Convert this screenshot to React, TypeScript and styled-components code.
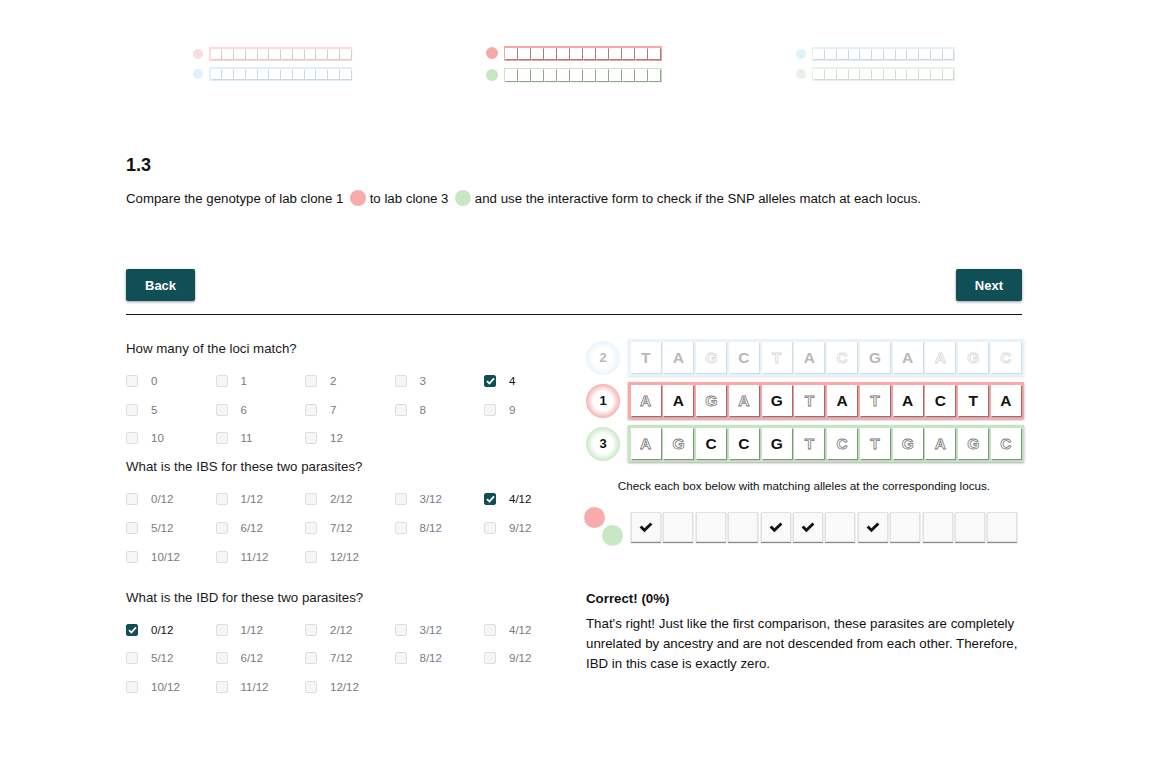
import React from 'react';
import styled, { createGlobalStyle } from 'styled-components';

const GlobalStyle = createGlobalStyle`
  html, body { margin: 0; padding: 0; background: #fff; }
  body { font-family: "Liberation Sans", Arial, Helvetica, sans-serif; color: #111; }
`;

const COLORS = { red: '#f7a8a8', green: '#c5e6c0', blue: '#b1def7' };
type ColorKey = keyof typeof COLORS;

const Page = styled.div`
  width: 896px;
  padding: 46px 0 40px 126px;
`;

/* ---------- overview strips ---------- */
const Overview = styled.div`
  display: flex;
  justify-content: space-around;
  align-items: center;
`;

const StripGroup = styled.div<{ $faded?: boolean; $gap: number }>`
  display: flex;
  flex-direction: column;
  gap: ${p => p.$gap}px;
  opacity: ${p => (p.$faded ? 0.4 : 1)};
`;

const StripRow = styled.div<{ $gap: number }>`
  display: flex;
  align-items: center;
  gap: ${p => p.$gap}px;
`;

const StripDot = styled.span<{ $color: string; $size: number }>`
  flex: none;
  width: ${p => p.$size}px;
  height: ${p => p.$size}px;
  border-radius: 50%;
  background: ${p => p.$color};
`;

const StripFrame = styled.div<{ $color: string }>`
  display: flex;
  gap: 1px;
  padding: 0.5px;
  border: 1px solid ${p => p.$color};
  background: ${p => p.$color};
`;

const StripCell = styled.span<{ $w: number; $h: number }>`
  width: ${p => p.$w}px;
  height: ${p => p.$h}px;
  background: #fff;
  box-shadow: 1px 1px 1px rgba(0, 0, 0, 0.28);
`;

/* ---------- header ---------- */
const Title = styled.h2`
  margin: 72px 0 0;
  font-size: 18px;
  line-height: 22px;
  font-weight: bold;
`;

const Intro = styled.p`
  margin: 13px 0 0;
  font-size: 13.25px;
  line-height: 20px;
`;

const InlineDot = styled.span<{ $color: string }>`
  display: inline-block;
  width: 16px;
  height: 16px;
  margin-left: 3px;
  border-radius: 50%;
  background: ${p => p.$color};
  vertical-align: -3px;
`;

const Nav = styled.div`
  display: flex;
  justify-content: space-between;
  margin-top: 60px;
`;

const NavButton = styled.button`
  height: 32px;
  padding: 0 19px;
  border: none;
  border-radius: 2px;
  background: #0f4f55;
  color: #fff;
  font-family: "Liberation Sans", Arial, sans-serif;
  font-weight: bold;
  font-size: 13px;
  box-shadow: 0 1px 3px rgba(0, 0, 0, 0.4);
  cursor: pointer;
`;

const Rule = styled.hr`
  margin: 13px 0 0;
  border: 0;
  border-top: 1px solid #111;
`;

const Body = styled.div`
  display: grid;
  grid-template-columns: 460px 436px;
  margin-top: 24px;
`;

/* ---------- questions ---------- */
const Questions = styled.div``;

const Question = styled.div<{ $gap: number }>`
  margin-top: ${p => p.$gap}px;
`;

const QTitle = styled.div`
  font-size: 13.3px;
  line-height: 20px;
  color: #1a1a1a;
`;

const OptionGrid = styled.div`
  display: grid;
  grid-template-columns: repeat(5, 89.5px);
  row-gap: 16.7px;
  margin-top: 16px;
`;

const Option = styled.label<{ $checked?: boolean }>`
  display: flex;
  align-items: center;
  gap: 13px;
  height: 12px;
  font-size: 11.5px;
  color: ${p => (p.$checked ? '#111' : '#777b84')};
`;

const Box = styled.span<{ $checked?: boolean }>`
  flex: none;
  box-sizing: border-box;
  width: 12px;
  height: 12px;
  border-radius: 2px;
  border: 1px solid ${p => (p.$checked ? '#0f4f55' : '#dedede')};
  background: ${p => (p.$checked ? '#0f4f55' : '#f6f6f6')};
  display: flex;
  align-items: center;
  justify-content: center;
`;

/* ---------- sequences ---------- */
const Panel = styled.div``;

const Sequences = styled.div`
  display: flex;
  flex-direction: column;
  gap: 6px;
`;

const SeqRow = styled.div<{ $faded?: boolean }>`
  display: flex;
  align-items: center;
  gap: 7.7px;
  opacity: ${p => (p.$faded ? 0.3 : 1)};
`;

const Badge = styled.div<{ $color: string }>`
  flex: none;
  width: 34px;
  height: 34px;
  border-radius: 50%;
  background: radial-gradient(circle, #fff 40%, ${p => p.$color} 74%);
  display: flex;
  align-items: center;
  justify-content: center;
  font-weight: bold;
  font-size: 13px;
  color: #111;
`;

const SeqFrame = styled.div<{ $color: string }>`
  display: flex;
  gap: 2.75px;
  padding: 1px;
  border: 2px solid ${p => p.$color};
  background: ${p => p.$color};
  box-shadow: 0 1px 2px rgba(0, 0, 0, 0.35);
`;

const SeqCell = styled.div<{ $outline?: boolean }>`
  width: 30px;
  height: 31px;
  background: #fff;
  box-shadow: 1px 1px 1px rgba(0, 0, 0, 0.35);
  display: flex;
  align-items: center;
  justify-content: center;
  font-weight: bold;
  font-size: 15.5px;
  color: ${p => (p.$outline ? '#fff' : '#111')};
  -webkit-text-stroke: ${p => (p.$outline ? '0.8px #7a7a7a' : '0')};
`;

const Instruction = styled.div`
  margin-top: 16px;
  text-align: center;
  font-size: 11.7px;
  line-height: 16px;
  color: #111;
`;

const CheckRow = styled.div`
  display: flex;
  align-items: center;
  gap: 7px;
  margin: 13px 0 0 -2px;
`;

const DotCluster = styled.div`
  position: relative;
  flex: none;
  width: 40px;
  height: 40px;
`;

const ClusterDot = styled.span<{ $color: string; $x: number; $y: number }>`
  position: absolute;
  left: ${p => p.$x}px;
  top: ${p => p.$y}px;
  width: 21px;
  height: 21px;
  border-radius: 50%;
  background: ${p => p.$color};
`;

const CheckCells = styled.div`
  display: flex;
  gap: 2.4px;
`;

const CheckCell = styled.div`
  box-sizing: border-box;
  width: 30px;
  height: 30px;
  background: #f9f9f9;
  border: 1px solid #e2e2e2;
  box-shadow: 0 1px 1px rgba(0, 0, 0, 0.45);
  display: flex;
  align-items: center;
  justify-content: center;
`;

const Feedback = styled.div`
  margin-top: 42px;
  font-size: 13.3px;
  line-height: 20px;
`;

const FeedbackTitle = styled.div`
  font-weight: bold;
  margin-bottom: 5px;
`;

/* ---------- data ---------- */
const strip12 = Array.from({ length: 12 });

const groups: { faded: boolean; big: boolean; rows: ColorKey[] }[] = [
  { faded: true, big: false, rows: ['red', 'blue'] },
  { faded: false, big: true, rows: ['red', 'green'] },
  { faded: true, big: false, rows: ['blue', 'green'] },
];

// letters: uppercase solid, lowercase outlined
const seqRows: { id: string; color: ColorKey; faded?: boolean; seq: string }[] = [
  { id: '2', color: 'blue', faded: true, seq: 'TAgCtAcGAagc' },
  { id: '1', color: 'red', seq: 'aAgaGtAtACTA' },
  { id: '3', color: 'green', seq: 'agCCGtctgagc' },
];

const checks = [true, false, false, false, true, true, false, true, false, false, false, false];

const questions = [
  { title: 'How many of the loci match?', gap: 0, suffix: '', checked: 4 },
  { title: 'What is the IBS for these two parasites?', gap: 13, suffix: '/12', checked: 4 },
  { title: 'What is the IBD for these two parasites?', gap: 25, suffix: '/12', checked: 0 },
];

const SmallCheck = () => (
  <svg width="9" height="8" viewBox="0 0 9 8">
    <polyline points="1,4.2 3.4,6.5 8,1.3" fill="none" stroke="#fff" strokeWidth="1.8" />
  </svg>
);

const HeavyCheck = () => (
  <svg width="14" height="11" viewBox="0 0 14 11">
    <path d="M0.6 5.6 L2.6 3.6 L5.4 6.2 L11.4 0.4 L13.4 2.4 L5.4 10.2 Z" fill="#111" />
  </svg>
);

export default function App() {
  return (
    <>
      <GlobalStyle />
      <Page>
        <Overview>
          {groups.map((g, gi) => (
            <StripGroup key={gi} $faded={g.faded} $gap={g.big ? 7 : 6.7}>
              {g.rows.map(c => (
                <StripRow key={c} $gap={g.big ? 5.5 : 6}>
                  <StripDot $color={COLORS[c]} $size={g.big ? 12 : 10} />
                  <StripFrame $color={COLORS[c]}>
                    {strip12.map((_, i) => (
                      <StripCell key={i} $w={g.big ? 12 : 10.75} $h={g.big ? 11.5 : 10.5} />
                    ))}
                  </StripFrame>
                </StripRow>
              ))}
            </StripGroup>
          ))}
        </Overview>

        <Title>1.3</Title>
        <Intro>
          Compare the genotype of lab clone 1 <InlineDot $color="#f9abab" /> to lab clone 3{' '}
          <InlineDot $color="#c7e8c3" /> and use the interactive form to check if the SNP alleles
          match at each locus.
        </Intro>

        <Nav>
          <NavButton>Back</NavButton>
          <NavButton>Next</NavButton>
        </Nav>
        <Rule />

        <Body>
          <Questions>
            {questions.map(q => (
              <Question key={q.title} $gap={q.gap}>
                <QTitle>{q.title}</QTitle>
                <OptionGrid>
                  {Array.from({ length: 13 }).map((_, i) => {
                    const on = i === q.checked;
                    return (
                      <Option key={i} $checked={on}>
                        <Box $checked={on}>{on && <SmallCheck />}</Box>
                        {i}
                        {q.suffix}
                      </Option>
                    );
                  })}
                </OptionGrid>
              </Question>
            ))}
          </Questions>

          <Panel>
            <Sequences>
              {seqRows.map(r => (
                <SeqRow key={r.id} $faded={r.faded}>
                  <Badge $color={COLORS[r.color]}>{r.id}</Badge>
                  <SeqFrame $color={COLORS[r.color]}>
                    {r.seq.split('').map((ch, i) => (
                      <SeqCell key={i} $outline={ch === ch.toLowerCase()}>
                        {ch.toUpperCase()}
                      </SeqCell>
                    ))}
                  </SeqFrame>
                </SeqRow>
              ))}
            </Sequences>

            <Instruction>Check each box below with matching alleles at the corresponding locus.</Instruction>

            <CheckRow>
              <DotCluster>
                <ClusterDot $color="#f9abab" $x={0} $y={0} />
                <ClusterDot $color="#c7e8c3" $x={18} $y={17.6} />
              </DotCluster>
              <CheckCells>
                {checks.map((c, i) => (
                  <CheckCell key={i}>{c && <HeavyCheck />}</CheckCell>
                ))}
              </CheckCells>
            </CheckRow>

            <Feedback>
              <FeedbackTitle>Correct! (0%)</FeedbackTitle>
              That's right! Just like the first comparison, these parasites are completely unrelated
              by ancestry and are not descended from each other. Therefore, IBD in this case is
              exactly zero.
            </Feedback>
          </Panel>
        </Body>
      </Page>
    </>
  );
}
